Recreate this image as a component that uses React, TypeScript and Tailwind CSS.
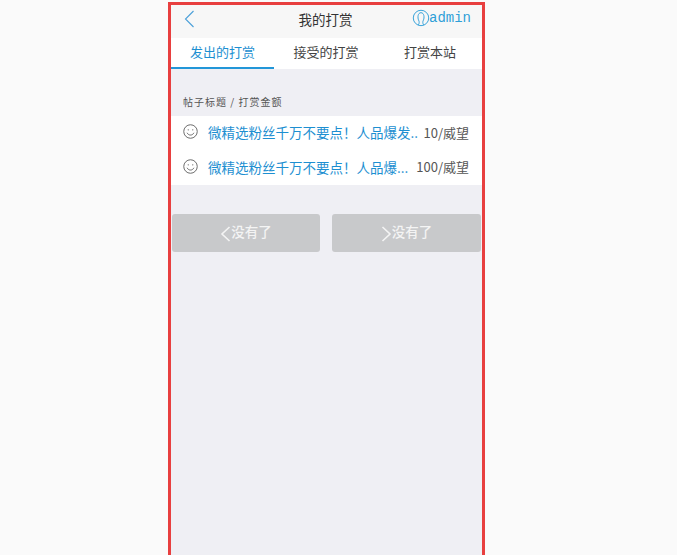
import React from "react";

const cjk = "font-['Noto_Sans_CJK_SC',sans-serif]";

const rows = [
  { title: "微精选粉丝千万不要点！人品爆发..", amount: "10/威望", height: "h-[35px]" },
  { title: "微精选粉丝千万不要点！人品爆...", amount: "100/威望", height: "h-[34px]" },
];

function Smile() {
  return (
    <svg width="15" height="15" viewBox="0 0 14 14" fill="none" stroke="#666" strokeWidth="0.9" className="shrink-0">
      <circle cx="7" cy="7" r="6.3" />
      <circle cx="4.9" cy="5.4" r="0.6" fill="#666" stroke="none" />
      <circle cx="9.1" cy="5.4" r="0.6" fill="#666" stroke="none" />
      <path d="M3.8 8.2c.8 1.5 1.9 2.1 3.2 2.1s2.4-.6 3.2-2.1" />
    </svg>
  );
}

function PageButton({ dir, width }: { dir: "prev" | "next"; width: string }) {
  return (
    <button className={`flex h-[38px] items-center justify-center rounded-[3px] bg-[#c8c9cb] pb-[3px] text-[13.5px] font-medium text-[#f4f4f4] ${width}`}>
      <svg width="11" height="16" viewBox="0 0 11 16" fill="none" stroke="#f4f4f4" strokeWidth="1.6" className="mt-[4px]">
        {dir === "prev" ? <path d="M9.5 1 2 8l7.5 7" /> : <path d="M1.5 1 9 8l-7.5 7" />}
      </svg>
      <span>没有了</span>
    </button>
  );
}

export default function App() {
  return (
    <div className={`h-[555px] w-[677px] overflow-hidden bg-[#fafafa] pl-[168px] pt-[2px] ${cjk}`}>
      <div className="flex h-[556px] w-[317px] flex-col border-[3px] border-[#e83f3f] bg-[#efeff4]">
        <header className="relative flex h-[33px] items-center justify-center bg-[#f7f7f7] pb-[5px] pr-[2px] text-[13.5px] text-[#333]">
          <svg className="absolute left-[13px] top-[5px]" width="11" height="18" viewBox="0 0 11 18" fill="none" stroke="#4a9fd8" strokeWidth="1.1">
            <path d="M9.5 1 1.500 9l8 8" />
          </svg>
          <span>我的打赏</span>
          <div className="absolute right-[11px] top-[4px] flex items-center">
            <svg width="18" height="19" viewBox="0 0 16 18" fill="none" stroke="#2f9fd8" strokeWidth="0.9">
              <circle cx="8" cy="8.5" r="7.3" />
              <path d="M5.5 15c1-1.500 1-3 .2-4.500C4.700 8.500 4.800 3.500 8 3.500s3.300 5 2.300 7c-.8 1.500-.8 3 .2 4.500" />
            </svg>
            <span className="-ml-[1px] -mt-[2px] font-['Liberation_Mono',monospace] text-[14px] leading-none text-[#2f9fd8]">admin</span>
          </div>
        </header>

        <nav className="flex h-[31px] bg-white text-[13px] text-[#444]">
          <div className="flex w-[103px] items-center justify-center border-b-2 border-[#2296d8] pb-[1px] text-[#1d8fd1]">发出的打赏</div>
          <div className="flex w-[104px] items-center justify-center pb-[3px]">接受的打赏</div>
          <div className="flex w-[104px] items-center justify-center pb-[3px]">打赏本站</div>
        </nav>

        <div className="px-[12px] pb-[6px] pt-[25px] text-[10px] leading-[16px] tracking-[1px] text-[#555]">帖子标题 / 打赏金额</div>

        <ul className="bg-white">
          {rows.map((row) => (
            <li key={row.amount} className={`flex items-center pl-[12px] pr-[13px] ${row.height}`}>
              <span className="-mt-[4px]"><Smile /></span>
              <span className="ml-[10px] min-w-0 flex-1 whitespace-nowrap pb-[2px] text-[13.5px] text-[#1d8fd1]">{row.title}</span>
              <span className="shrink-0 pb-[2px] text-[13px] text-[#555]">{row.amount}</span>
            </li>
          ))}
        </ul>

        <div className="flex gap-[12px] px-[1px] pt-[29px]">
          <PageButton dir="prev" width="w-[148px]" />
          <PageButton dir="next" width="w-[149px]" />
        </div>
      </div>
    </div>
  );
}
